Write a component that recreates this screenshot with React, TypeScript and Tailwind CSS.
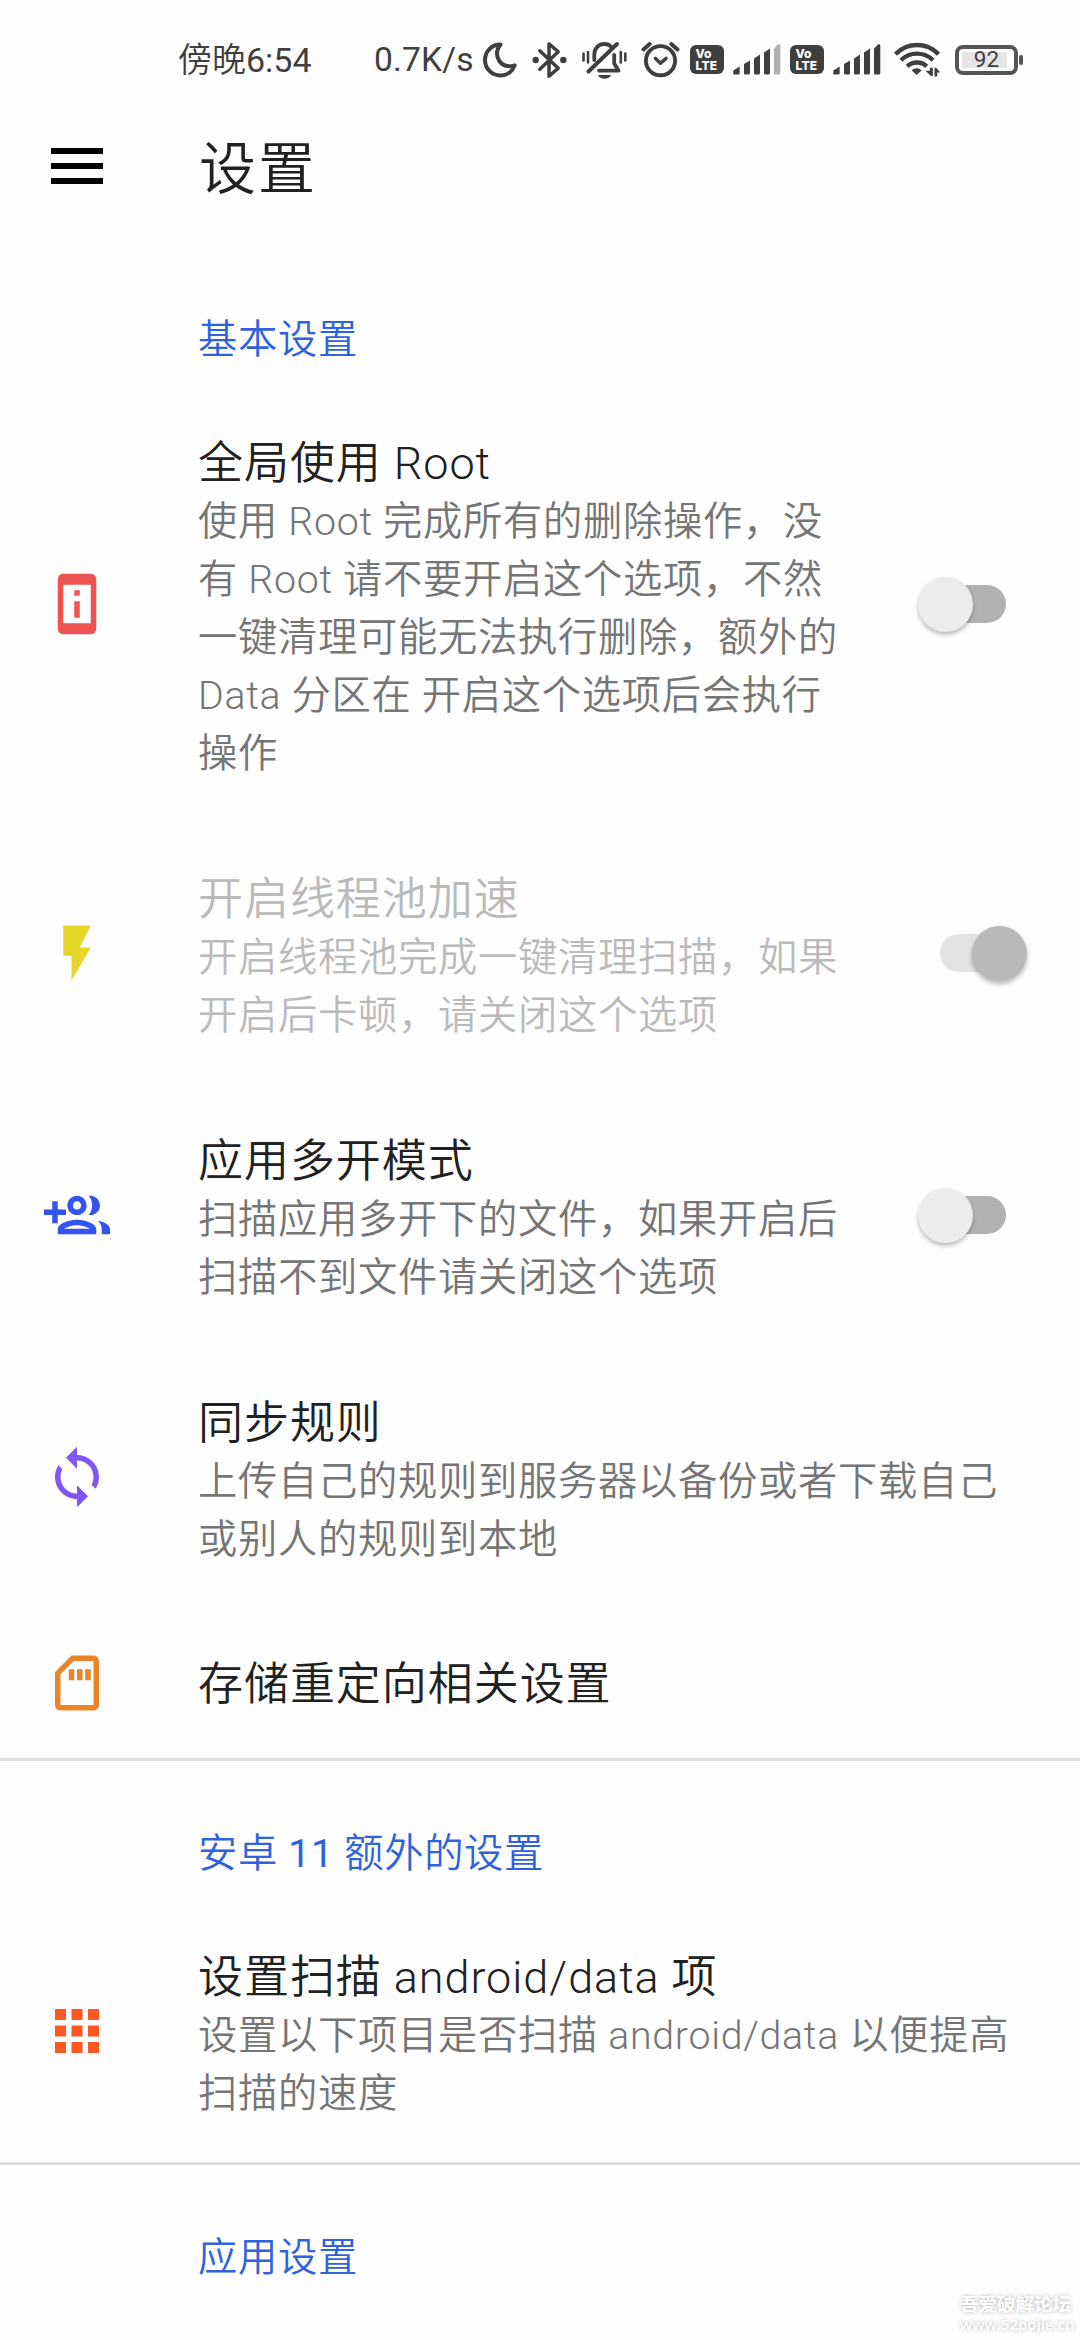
import React from "react";
import {
  MdApps,
  MdFlashOn,
  MdOutlineSdCard,
  MdPermDeviceInformation,
  MdSync,
} from "react-icons/md";

function GroupAddIcon({ className }: { className?: string }) {
  return (
    <svg viewBox="0 0 24 24" fill="currentColor" className={className}>
      <path d="M8 10H5V7H3v3H0v2h3v3h2v-3h3z" />
      <path d="M12 12c1.93 0 3.5-1.57 3.5-3.5S13.93 5 12 5 8.5 6.57 8.5 8.5 10.07 12 12 12zm0-5c.83 0 1.5.67 1.5 1.5S12.83 10 12 10s-1.5-.67-1.5-1.5S11.17 7 12 7z" />
      <path d="M12 13.75c-2.34 0-7 1.17-7 3.5V19h14v-1.75c0-2.33-4.66-3.5-7-3.5zM7.34 17c.84-.58 2.87-1.25 4.66-1.25s3.82.67 4.66 1.25z" />
      <path d="M16.25 5.03A5.4 5.4 0 0 1 17.5 8.5a5.4 5.4 0 0 1-1.25 3.47c.2.02.4.03.6.03 1.93 0 3.5-1.57 3.5-3.5S18.78 5 16.85 5c-.2 0-.4.01-.6.03z" />
      <path d="M19.6 14.05c.9.84 1.4 1.9 1.4 3.2V19h3v-1.75c0-1.75-2.1-2.78-4.4-3.2z" />
    </svg>
  );
}

function MoonIcon({ className }: { className?: string }) {
  return (
    <svg viewBox="0 0 34 36" className={className} fill="none" stroke="currentColor" strokeWidth="4" strokeLinejoin="round">
      <path d="M17.5 2.6C8.500 2.600 2 9.500 2 18s6.800 15.500 15.300 15.500c6.900 0 12.300-4.300 14.400-10.200-8 2.400-13.400-.6-15.900-5.300-2.700-5-2.100-10.600 1.700-15.400z" />
    </svg>
  );
}

function BluetoothIcon({ className }: { className?: string }) {
  return (
    <svg viewBox="0 0 36 38" className={className} fill="none" stroke="currentColor" strokeWidth="3.6" strokeLinejoin="round" strokeLinecap="round">
      <path d="M8 9.500 27 27.500 17.500 35.500V2.500L27 10.500 8 28.500" />
      <circle cx="3.800" cy="19" r="3.300" fill="currentColor" stroke="none" />
      <circle cx="32.200" cy="19" r="3.300" fill="currentColor" stroke="none" />
    </svg>
  );
}

function MutedBellIcon({ className }: { className?: string }) {
  return (
    <svg viewBox="0 0 45 38" className={className} fill="none" stroke="currentColor" strokeLinecap="round">
      <path strokeWidth="2.600" d="M1.500 12.500v7M6 11v10.500M38.800 11v10.500M43.300 12.500v7" />
      <path strokeWidth="3.800" d="M12.300 19v-5.500C12.300 7 16.800 3 22.200 3c2.800 0 5.300 1 7 2.800M32.200 14v8.500L36.500 29.600H17" strokeLinejoin="round" />
      <path strokeWidth="4" d="M35 3 6.500 30.500" />
      <path d="M16 34h13c-2 5-11 5-13 0z" fill="currentColor" stroke="none" />
    </svg>
  );
}

function AlarmIcon({ className }: { className?: string }) {
  return (
    <svg viewBox="0 0 39 37" className={className} fill="none" stroke="currentColor" strokeLinecap="round" strokeLinejoin="round">
      <circle cx="19.500" cy="19.700" r="14.600" strokeWidth="3.900" />
      <path strokeWidth="4" d="M2.500 8.500 8.700 3M36.500 8.500 30.300 3" />
      <path strokeWidth="3.600" d="m14.500 17.500 5 4.700 5.500-4.700" />
    </svg>
  );
}

function VolteBadge() {
  return (
    <div className="flex h-[29px] w-[34px] flex-col rounded-[6px] bg-[#3f3f3f] pl-[5.500px] pt-[3px] font-['Inter'] text-[12px] font-extrabold leading-[12px] text-white">
      <span>Vo</span>
      <span className="tracking-[0.200px]">LTE</span>
    </div>
  );
}

function SignalIcon({ weak, className }: { weak?: boolean; className?: string }) {
  return (
    <svg viewBox="0 0 48 31" className={className} fill="currentColor">
      <path d="M.3 30.500V26.500L6.700 22.500V29q0 1.500-1.500 1.500z" />
      <path d="M11 29.500V20l6-3.500V29q0 1.500-1.500 1.500H12q-1 0-1-1z" />
      <path d="M21 29.500V14.500l6-4V29q0 1.500-1.500 1.500H22q-1 0-1-1z" />
      <path d="M31 29.500V8.500L37 4.500V29q0 1.500-1.500 1.500H32q-1 0-1-1z" />
      <path d="M41 29.500V4.500L45.500 0q1.800 0 1.800 1.500V29q0 1.500-1.500 1.500H42q-1 0-1-1z" opacity={weak ? 0.4 : 1} />
    </svg>
  );
}

function WifiIcon({ className }: { className?: string }) {
  return (
    <svg viewBox="0 0 46 35" className={className} fill="none" stroke="currentColor" strokeWidth="4.400">
      <path d="M1.500 12.200c12-12.200 31.200-12.200 43 0" />
      <path d="M7 18.200c9-8.800 23-8.800 32 0" />
      <path d="M13.200 24.300c5.600-5 14-5 19.600 0" />
      <path d="M17.800 28.500c2.900-2.900 6.900-2.900 9.800 0L22.700 33z" fill="currentColor" stroke="none" />
      <path d="M38.800 25.700V34h-1.800l-5.500-5.300h4.500v-3zM40.500 34.500v-8.800h1.700l4 4.800h-3v4z" fill="currentColor" stroke="none" />
    </svg>
  );
}

function Battery() {
  return (
    <div className="flex items-center gap-px">
      <div className="flex h-[30px] w-[63px] items-center rounded-[8px] border-4 border-[#555] px-[3px]">
        <div className="flex h-[16px] w-[45px] items-center justify-center bg-[#e5e5e5] pl-[4px] text-[22.500px] font-normal leading-none text-[#3f3f3f]">
          92
        </div>
      </div>
      <div className="h-[10px] w-[4px] rounded-[2px] bg-[#555]" />
    </div>
  );
}

function StatusBar() {
  return (
    <div className="flex h-[119px] items-center pl-[178px] text-[#3f3f3f]">
      <div className="w-[196px] whitespace-nowrap pt-px text-[34px] font-[350] leading-[40px]">
        傍晚<span className="font-normal">6:54</span>
      </div>
      <div className="w-[109px] whitespace-nowrap pt-px text-[33.500px] font-normal leading-[40px] tracking-[0.200px]">0.7K/s</div>
      <MoonIcon className="h-[36px] w-[34px]" />
      <BluetoothIcon className="ml-[15px] h-[38px] w-[35px]" />
      <MutedBellIcon className="ml-[15px] h-[38px] w-[45px]" />
      <AlarmIcon className="ml-[14px] h-[37px] w-[39px]" />
      <div className="ml-[10px] flex items-center gap-[9px]">
        <VolteBadge />
        <SignalIcon weak className="h-[31px] w-[48px]" />
        <VolteBadge />
        <SignalIcon className="h-[31px] w-[48px]" />
      </div>
      <WifiIcon className="ml-[13px] mr-[15px] h-[35px] w-[46px]" />
      <Battery />
    </div>
  );
}

function AppBar() {
  return (
    <div className="flex h-[93px] items-center pl-[51px]">
      <div className="flex w-[148px] flex-col gap-[9px]">
        <div className="h-[6px] w-[52px] bg-black" />
        <div className="h-[6px] w-[52px] bg-black" />
        <div className="h-[6px] w-[52px] bg-black" />
      </div>
      <h1 className="pt-[9px] text-[57px] font-[350] leading-[70px] tracking-[2px] text-[#212121]">设置</h1>
    </div>
  );
}

function SectionHeader({ children, divided }: { children: React.ReactNode; divided?: boolean }) {
  return (
    <div
      className={
        divided
          ? "flex h-[141px] items-end border-t-[3px] border-[#e0e0e0] pb-[16px] pl-[198px]"
          : "flex h-[174px] items-end pb-[17px] pl-[198px]"
      }
    >
      <h2 className="text-[39.300px] font-[350] leading-[58px] tracking-[0.700px] text-[#2f63dd]">{children}</h2>
    </div>
  );
}

function Switch({ on }: { on?: boolean }) {
  return (
    <div role="switch" aria-checked={!!on} className="relative flex h-[55px] w-[109px] items-center justify-center">
      <div className={on ? "h-[38px] w-[66px] rounded-full bg-[#e3e3e3]" : "h-[38px] w-[66px] rounded-full bg-[#b2b2b2]"} />
      <div
        className={
          on
            ? "absolute right-0 top-0 size-[55px] rounded-full bg-[#b9b9b9] shadow-[0_3px_5px_rgba(0,0,0,0.28)]"
            : "absolute left-0 top-0 size-[55px] rounded-full bg-[#ececec] shadow-[0_3px_4px_rgba(0,0,0,0.25)]"
        }
      />
    </div>
  );
}

type RowProps = {
  icon: React.ReactNode;
  title: string;
  lines?: string[];
  disabled?: boolean;
  toggle?: "on" | "off";
};

function Row({ icon, title, lines, disabled, toggle }: RowProps) {
  return (
    <div className="flex items-center pl-[44px] pr-[53px]">
      <div className="w-[154px] shrink-0">{icon}</div>
      <div className={lines ? "flex-1 pb-[39px] pt-[49px]" : "flex-1 pb-[42px] pt-[46px]"}>
        <div
          className={
            disabled
              ? "whitespace-nowrap text-[45px] font-[350] leading-[58px] tracking-[0.950px] text-[#bababa]"
              : "whitespace-nowrap text-[45px] font-[350] leading-[58px] tracking-[0.950px] text-[#212121]"
          }
        >
          {title}
        </div>
        {lines?.map((line) => (
          <div
            key={line}
            className={
              disabled
                ? "whitespace-nowrap text-[39.300px] font-[350] leading-[58px] tracking-[0.700px] text-[#bababa]"
                : "whitespace-nowrap text-[39.300px] font-[350] leading-[58px] tracking-[0.700px] text-[#757575]"
            }
          >
            {line}
          </div>
        ))}
      </div>
      {toggle && <Switch on={toggle === "on"} />}
    </div>
  );
}

export default function App() {
  return (
    <div
      lang="zh-CN"
      className="relative flex h-[2340px] w-[1080px] flex-col overflow-hidden bg-[#fefefe] font-['Roboto','Noto_Sans_CJK_SC',sans-serif]"
    >
      <StatusBar />
      <AppBar />

      <SectionHeader>基本设置</SectionHeader>
      <Row
        icon={<MdPermDeviceInformation className="size-[66px] text-[#ee5253]" />}
        title="全局使用 Root"
        lines={[
          "使用 Root 完成所有的删除操作，没",
          "有 Root 请不要开启这个选项，不然",
          "一键清理可能无法执行删除，额外的",
          "Data 分区在 开启这个选项后会执行",
          "操作",
        ]}
        toggle="off"
      />
      <Row
        icon={<MdFlashOn className="size-[66px] text-[#e5d627]" />}
        title="开启线程池加速"
        lines={["开启线程池完成一键清理扫描，如果", "开启后卡顿，请关闭这个选项"]}
        disabled
        toggle="on"
      />
      <Row
        icon={<GroupAddIcon className="size-[66px] text-[#3454ef]" />}
        title="应用多开模式"
        lines={["扫描应用多开下的文件，如果开启后", "扫描不到文件请关闭这个选项"]}
        toggle="off"
      />
      <Row
        icon={<MdSync className="size-[66px] text-[#8056f5]" />}
        title="同步规则"
        lines={["上传自己的规则到服务器以备份或者下载自己", "或别人的规则到本地"]}
      />
      <div className="h-[150px] pt-[2px]">
        <Row
          icon={<MdOutlineSdCard className="size-[66px] text-[#e98526]" />}
          title="存储重定向相关设置"
        />
      </div>

      <SectionHeader divided>
        安卓 <span className="font-normal">11</span> 额外的设置
      </SectionHeader>
      <div className="h-[263px] pt-px">
        <Row
          icon={<MdApps className="size-[66px] text-[#ff5722]" />}
          title="设置扫描 android/data 项"
          lines={["设置以下项目是否扫描 android/data 以便提高", "扫描的速度"]}
        />
      </div>

      <SectionHeader divided>应用设置</SectionHeader>

      <div className="absolute bottom-[7px] right-[8px] flex w-[112px] flex-col font-bold text-white [text-shadow:0_0_4px_rgba(0,0,0,0.3)]">
        <span className="whitespace-nowrap text-[18.500px] leading-[20px]">吾爱破解论坛</span>
        <span className="whitespace-nowrap font-['Open_Sans'] text-[15px] font-semibold leading-[18px]">www.52pojie.cn</span>
      </div>
    </div>
  );
}
